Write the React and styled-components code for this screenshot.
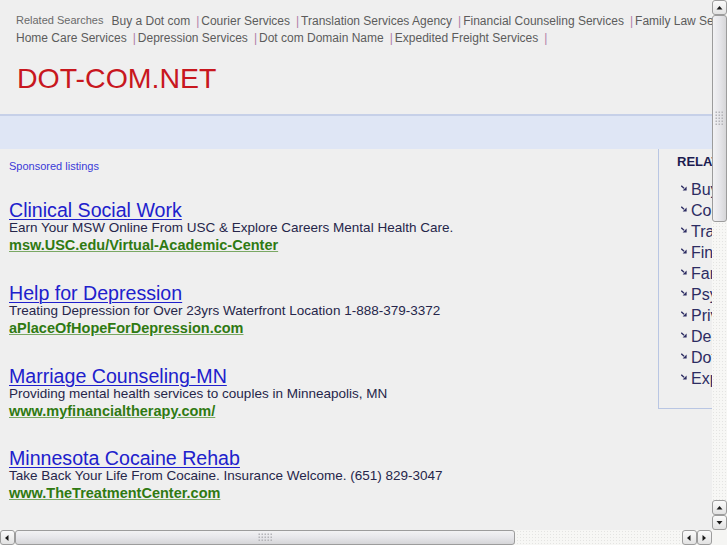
import React from 'react'
import styled, { createGlobalStyle } from 'styled-components'

/*
page bg    #efefef
red logo   #c8171e
link blue  #2020cc
ad green   #2f7a12
navy       #24245c
*/

const GlobalStyle = createGlobalStyle`
  html, body {
    margin: 0;
    padding: 0;
    background: #efefef;
    font-family: 'Liberation Sans', Arial, sans-serif;
    overflow: hidden;
  }
`

// browser window: the page area plus GTK style scrollbars
const Window = styled.div`
  width: 100vw;
  height: 100vh;
  display: grid;
  grid-template-columns: 1fr 15px;
  grid-template-rows: 1fr 15px;
`

const Viewport = styled.div`
  overflow: hidden;
  min-width: 0;
  min-height: 0;
`

const Bar = styled.div`
  display: flex;
  flex-direction: ${p => (p.vertical ? 'column' : 'row')};
  background-color: #f7f7f5;
  background-image: radial-gradient(#e4e4e2 0.7px, transparent 0.9px);
  background-size: 3px 3px;
`

const Corner = styled.div`
  background: #f5f5f3;
`

const Btn = styled.div`
  flex: none;
  width: 15px;
  height: 15px;
  box-sizing: border-box;
  border: 1px solid #9c9c9c;
  border-radius: 3px;
  background: linear-gradient(to bottom, #fbfbfb, #e2e2e2);
  display: flex;
  align-items: center;
  justify-content: center;
`

const Thumb = styled.div`
  flex: none;
  box-sizing: border-box;
  width: ${p => (p.vertical ? '15px' : `${p.size}px`)};
  height: ${p => (p.vertical ? `${p.size}px` : '15px')};
  border: 1px solid #9c9c9c;
  border-radius: 3px;
  background: ${p => (p.vertical
    ? 'linear-gradient(to right, #f2f2f4, #e6e6ea 50%, #d6d6d8)'
    : 'linear-gradient(to bottom, #f2f2f4, #e6e6ea 50%, #d6d6d8)')};
  display: flex;
  align-items: center;
  justify-content: center;
`

const Spacer = styled.div`
  flex: 1;
`

const ARROWS = {
  up: '1.5,5.5 4.5,2 7.5,5.5',
  down: '1.5,2 4.5,5.5 7.5,2',
  left: '5.5,1 2,4 5.5,7',
  right: '2.5,1 6,4 2.5,7',
}

const ScrollBtn = ({ dir }) => (
  <Btn>
    <svg width="9" height="8" viewBox="0 0 9 8">
      <polygon points={ARROWS[dir]} fill="#1a1a1a" />
    </svg>
  </Btn>
)

const Grip = ({ vertical }) => {
  const cols = vertical ? 3 : 5
  const rows = vertical ? 5 : 3
  const dots = []
  for (let r = 0; r < rows; r++) {
    for (let c = 0; c < cols; c++) {
      dots.push(<rect key={`${r}-${c}`} x={c * 3 + 0.5} y={r * 3 + 0.5} width="1.5" height="1.5" fill="#b4b4b8" />)
    }
  }
  return (
    <svg width={cols * 3} height={rows * 3}>{dots}</svg>
  )
}

const Page = styled.div`
  width: 951px;
  min-height: 1242px;
`

const TopLinks = styled.div`
  padding: 13px 0 0 16px;
`

const LinkRow = styled.div`
  display: flex;
  align-items: baseline;
  white-space: nowrap;
  line-height: 17px;
  font-size: 12px;
`

const RelatedLabel = styled.span`
  font-size: 11px;
  color: #6a6a6a;
  margin-right: 8px;
  position: relative;
  top: -1px;
`

const TopLink = styled.a`
  color: #5c5c5c;
  text-decoration: none;
`

const Sep = styled.span`
  color: #b080a8;
  margin: 0 2px 0 6px;
`

const Logo = styled.div`
  margin: 15px 0 0 17px;
  font-size: 28.5px;
  line-height: 32px;
  color: #c8171e;
`

const Band = styled.div`
  margin-top: 20px;
  height: 33px;
  border-top: 2px solid #c6d0e8;
  background: #dfe6f5;
`

const Body = styled.div`
  display: flex;
  align-items: flex-start;
`

const Main = styled.div`
  flex: 0 0 649px;
  padding: 11px 0 0 9px;
`

const Sponsored = styled.a`
  display: block;
  font-size: 11px;
  line-height: 13px;
  color: #3a3ad8;
  text-decoration: none;
  margin-bottom: 27px;
`

const Ad = styled.div`
  margin-bottom: 28.8px;
`

const AdTitle = styled.a`
  display: block;
  font-size: 19.6px;
  line-height: 20px;
  color: #2020cc;
  text-decoration: underline;
  text-decoration-thickness: 1px;
  text-underline-offset: 2px;
`

const AdText = styled.div`
  font-size: 13.5px;
  line-height: 16px;
  color: #26264a;
`

const AdUrl = styled.a`
  display: block;
  font-size: 14.5px;
  line-height: 18px;
  font-weight: bold;
  color: #2f7a12;
  text-decoration: underline;
  text-decoration-color: #7aa864;
`

const Sidebar = styled.div`
  flex: 1;
  border-left: 1px solid #b9c6e3;
  border-bottom: 1px solid #b9c6e3;
  padding: 5px 0 19px 18px;
`

const SideHead = styled.div`
  font-size: 13px;
  line-height: 16px;
  font-weight: bold;
  color: #1c1c50;
  margin-bottom: 9px;
`

const SideList = styled.ul`
  list-style: none;
  margin: 0;
  padding: 0 0 0 4px;
`

const SideItem = styled.li`
  display: flex;
  align-items: center;
  height: 21px;
  font-size: 16px;
  color: #2c2c62;
  white-space: nowrap;
  svg {
    margin: 0 4px 4px 0;
    flex: none;
  }
`

const Arrow = () => (
  <svg width="6" height="6" viewBox="0 0 6 6">
    <path d="M0.3 0.8 L3 3.3" stroke="#2c2c62" strokeWidth="1.3" />
    <polygon points="5.6,1.6 5.6,5.6 1.6,5.6" fill="#2c2c62" />
  </svg>
)

const ROW1 = ['Buy a Dot com', 'Courier Services', 'Translation Services Agency',
  'Financial Counseling Services', 'Family Law Services', 'Psychologist']
const ROW2 = ['Home Care Services', 'Depression Services', 'Dot com Domain Name',
  'Expedited Freight Services']

const RELATED = ['Buy a Dot com', 'Courier Services', 'Translation Services Agency',
  'Financial Counseling Services', 'Family Law Services', 'Psychologist',
  'Private Investigator', 'Depression Services', 'Dot com Domain Name',
  'Expedited Freight Services']

const ADS = [
  { id: 1, title: 'Clinical Social Work',
    text: 'Earn Your MSW Online From USC & Explore Careers Mental Health Care.',
    url: 'msw.USC.edu/Virtual-Academic-Center' },
  { id: 2, title: 'Help for Depression',
    text: 'Treating Depression for Over 23yrs Waterfront Location 1-888-379-3372',
    url: 'aPlaceOfHopeForDepression.com' },
  { id: 3, title: 'Marriage Counseling-MN',
    text: 'Providing mental health services to couples in Minneapolis, MN',
    url: 'www.myfinancialtherapy.com/' },
  { id: 4, title: 'Minnesota Cocaine Rehab',
    text: 'Take Back Your Life From Cocaine. Insurance Welcome. (651) 829-3047',
    url: 'www.TheTreatmentCenter.com' },
]

const Links = ({ items }) => items.map((t, i) => (
  <React.Fragment key={t}>
    {i > 0 && <Sep>|</Sep>}
    <TopLink href="#">{t}</TopLink>
  </React.Fragment>
))

export default function App() {
  return (
    <Window>
      <GlobalStyle />
      <Viewport>
        <Page>
          <TopLinks>
            <LinkRow>
              <RelatedLabel>Related Searches</RelatedLabel>
              <Links items={ROW1} />
              <Sep>|</Sep>
            </LinkRow>
            <LinkRow>
              <Links items={ROW2} />
              <Sep>|</Sep>
            </LinkRow>
          </TopLinks>
          <Logo>DOT-COM.NET</Logo>
          <Band />
          <Body>
            <Main>
              <Sponsored href="#">Sponsored listings</Sponsored>
              {ADS.map(ad => (
                <Ad key={ad.id}>
                  <AdTitle href="#">{ad.title}</AdTitle>
                  <AdText>{ad.text}</AdText>
                  <AdUrl href="#">{ad.url}</AdUrl>
                </Ad>
              ))}
            </Main>
            <Sidebar>
              <SideHead>RELATED SEARCHES</SideHead>
              <SideList>
                {RELATED.map(r => (
                  <SideItem key={r}><Arrow />{r}</SideItem>
                ))}
              </SideList>
            </Sidebar>
          </Body>
        </Page>
      </Viewport>
      <Bar vertical>
        <ScrollBtn dir="up" />
        <Thumb vertical size={207}><Grip vertical /></Thumb>
        <Spacer />
        <ScrollBtn dir="up" />
        <ScrollBtn dir="down" />
      </Bar>
      <Bar>
        <ScrollBtn dir="left" />
        <Thumb size={500}><Grip /></Thumb>
        <Spacer />
        <ScrollBtn dir="left" />
        <ScrollBtn dir="right" />
      </Bar>
      <Corner />
    </Window>
  )
}
